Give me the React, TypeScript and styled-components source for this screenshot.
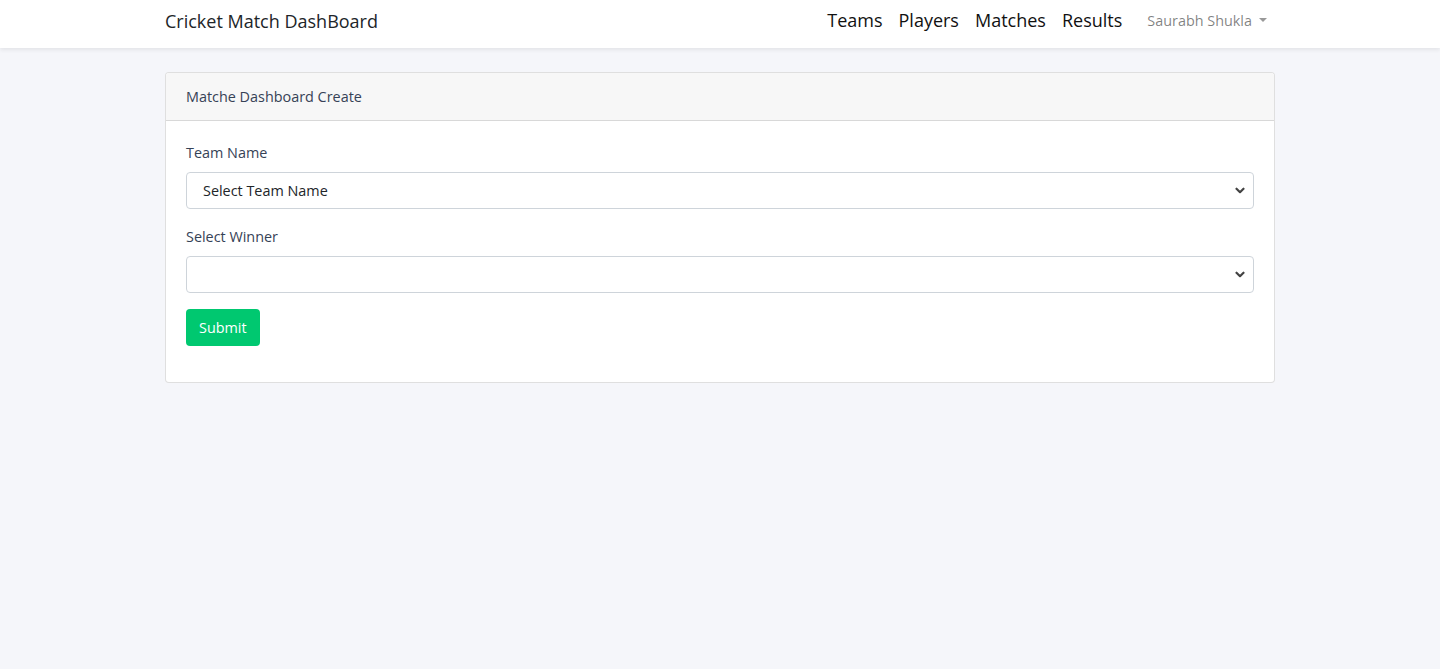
import React from "react";
import styled, { createGlobalStyle } from "styled-components";

const Global = createGlobalStyle`
  * { box-sizing: border-box; }
  html, body { margin: 0; padding: 0; }
  body {
    background: #f5f6fa;
    font-family: "Open Sans", "Noto Sans", sans-serif;
    font-size: 14.4px;
    line-height: 1.6;
    color: #212529;
  }
`;

const NavBar = styled.nav`
  background: #fff;
  box-shadow: 0 2px 4px rgba(0, 0, 0, 0.075);
  height: 48px;
  display: flex;
  align-items: center;
`;

const Container = styled.div`
  width: 1140px;
  margin: 0 auto;
  padding: 0 15px;
  display: flex;
  align-items: center;
`;

const Brand = styled.a`
  font-size: 18px;
  color: #212529;
  text-decoration: none;
  margin-top: -6px;
`;

const NavList = styled.ul`
  list-style: none;
  margin: -7px 0 0 auto;
  padding: 0;
  display: flex;
  align-items: center;
`;

const NavLink = styled.a`
  font-size: 18px;
  color: #111;
  text-decoration: none;
  padding: 0 8px;
`;

const UserLink = styled.a`
  font-size: 14.4px;
  color: rgba(0, 0, 0, 0.5);
  text-decoration: none;
  margin-left: 17px;
  padding-right: 8px;
  display: flex;
  align-items: center;
  &::after {
    content: "";
    display: inline-block;
    margin-left: 7px;
    border-top: 4.5px solid rgba(0, 0, 0, 0.4);
    border-left: 4.5px solid transparent;
    border-right: 4.5px solid transparent;
  }
`;

const Main = styled.main`
  padding-top: 24px;
`;

const Card = styled.div`
  width: 1110px;
  margin: 0 auto;
  background: #fff;
  border: 1px solid rgba(0, 0, 0, 0.125);
  border-radius: 4px;
  overflow: hidden;
`;

const CardHeader = styled.div`
  background: #f7f7f7;
  border-bottom: 1px solid rgba(0, 0, 0, 0.125);
  padding: 12px 20px;
  color: #364256;
`;

const CardBody = styled.div`
  padding: 20px;
`;

const FormGroup = styled.div`
  margin-bottom: 16px;
`;

const Label = styled.label`
  display: block;
  color: #364256;
  margin-bottom: 8px;
`;

const Select = styled.select`
  display: block;
  width: 100%;
  height: 37px;
  padding: 0 36px 0 16px;
  font-family: inherit;
  font-size: 14.4px;
  color: #212529;
  background: #fff
    url("data:image/svg+xml,%3Csvg xmlns='http://www.w3.org/2000/svg' width='12' height='8' viewBox='0 0 12 8'%3E%3Cpath d='M1.8 1.8l4.2 4.2 4.2-4.2' fill='none' stroke='%23444' stroke-width='2.6' stroke-linecap='round' stroke-linejoin='round'/%3E%3C/svg%3E")
    no-repeat right 8px center / 10px 7px;
  border: 1px solid #ced4da;
  border-radius: 4px;
  appearance: none;
  -webkit-appearance: none;
`;

const Button = styled.button`
  background: #00c870;
  border: none;
  color: #fff;
  font-family: inherit;
  font-size: 14.4px;
  line-height: 1.6;
  padding: 7px 13px;
  border-radius: 4px;
`;

export default function App() {
  return (
    <>
      <Global />
      <NavBar>
        <Container>
          <Brand href="#">Cricket Match DashBoard</Brand>
          <NavList>
            <li><NavLink href="#">Teams</NavLink></li>
            <li><NavLink href="#">Players</NavLink></li>
            <li><NavLink href="#">Matches</NavLink></li>
            <li><NavLink href="#">Results</NavLink></li>
            <li><UserLink href="#">Saurabh Shukla</UserLink></li>
          </NavList>
        </Container>
      </NavBar>
      <Main>
        <Card>
          <CardHeader>Matche Dashboard Create</CardHeader>
          <CardBody>
            <FormGroup>
              <Label>Team Name</Label>
              <Select defaultValue="">
                <option value="">Select Team Name</option>
              </Select>
            </FormGroup>
            <FormGroup>
              <Label>Select Winner</Label>
              <Select defaultValue="">
                <option value=""></option>
              </Select>
            </FormGroup>
            <FormGroup>
              <Button type="submit">Submit</Button>
            </FormGroup>
          </CardBody>
        </Card>
      </Main>
    </>
  );
}
